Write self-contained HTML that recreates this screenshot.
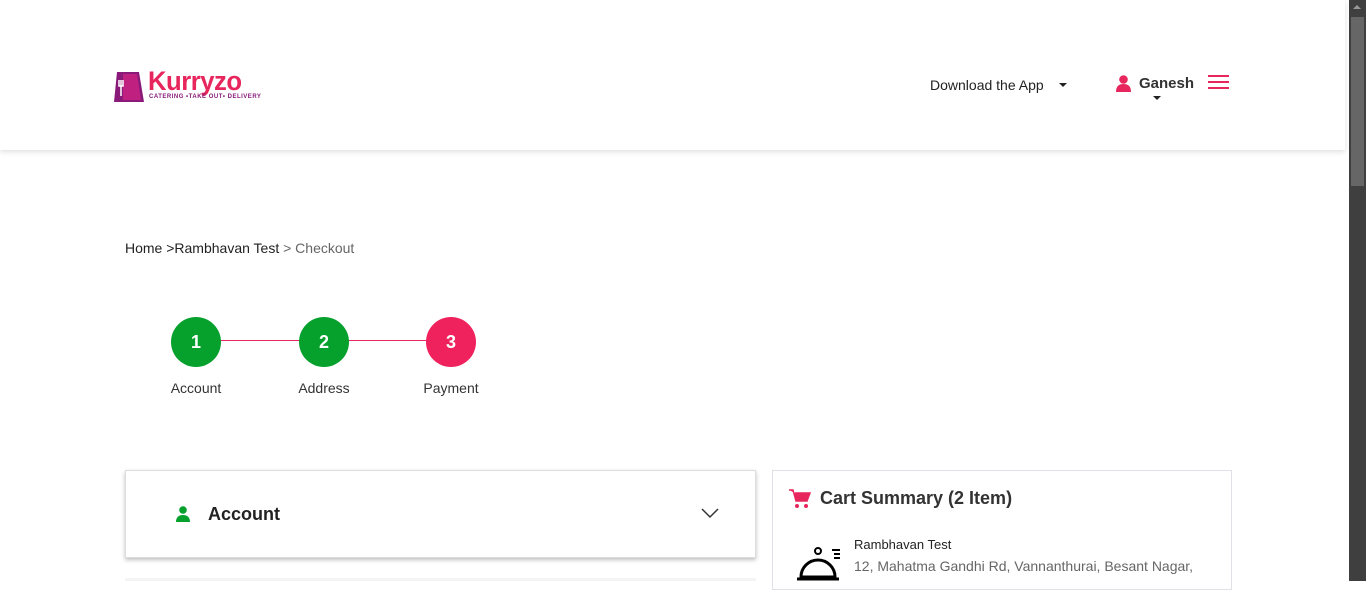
<!DOCTYPE html>
<html><head><meta charset="utf-8"><style>
*{margin:0;padding:0;box-sizing:border-box}
body{width:1366px;height:581px;overflow:hidden;background:#fff;font-family:"Liberation Sans",sans-serif;position:relative;color:#222}
.hdr{position:absolute;left:0;top:0;width:1345px;height:150px;background:#fff;box-shadow:0 2px 5px rgba(0,0,0,.12)}
.sb{position:absolute;left:1349px;top:0;width:17px;height:581px;background:#3f3f3f}
.th{position:absolute;left:1351px;top:17px;width:13px;height:169px;background:#666}
.abs{position:absolute}
.circ{position:absolute;width:50px;height:50px;border-radius:50%;color:#fff;font-weight:bold;font-size:18px;text-align:center;line-height:50px}
.lbl{position:absolute;font-size:14px;color:#333;width:100px;text-align:center}
</style></head><body>
<div class="hdr">
 <svg class="abs" style="left:113px;top:68px" width="32" height="34"><path d="M4 4h22l5 30H1z" fill="#8a1a7a"/><path d="M10 6h14l4 26H10z" fill="#c02080"/><path d="M8 12v16M6 12v6h4v-6" stroke="#fff" stroke-width="1.5" fill="none"/></svg>
 <div class="abs" style="left:148px;top:66px;font-size:27px;font-weight:bold;color:#e8265e;letter-spacing:-0.5px;transform:scaleX(0.95);transform-origin:left">Kurryzo</div>
 <div class="abs" style="left:149px;top:94px;font-size:6px;font-weight:bold;color:#8a1a7a;letter-spacing:.5px">CATERING •TAKE OUT• DELIVERY</div>
 <div class="abs" style="left:930px;top:77px;font-size:14px;color:#222">Download the App</div>
 <div class="abs" style="left:1059px;top:83px;border:4px solid transparent;border-top:4px solid #222;border-bottom:0"></div>
 <svg class="abs" style="left:1116px;top:75px" width="15" height="17"><circle cx="7.5" cy="4.5" r="4.3" fill="#e8265e"/><path d="M0 17c0-6 3-8 7.5-8s7.5 2 7.5 8z" fill="#e8265e"/></svg>
 <div class="abs" style="left:1139px;top:75px;font-size:15px;font-weight:bold;color:#333">Ganesh</div>
 <div class="abs" style="left:1153px;top:96px;border:4px solid transparent;border-top:4px solid #222;border-bottom:0"></div>
 <div class="abs" style="left:1208px;top:75px;width:21px;height:2px;background:#e8265e;box-shadow:0 6px 0 #e8265e,0 12px 0 #e8265e"></div>
</div>
<div class="abs" style="left:125px;top:240px;font-size:14px;color:#222">Home &gt;Rambhavan Test <span style="color:#666">&gt; Checkout</span></div>
<div class="abs" style="left:196px;top:340px;width:255px;height:1px;background:#e8265e"></div>
<div class="circ" style="left:171px;top:317px;background:#06a02d">1</div>
<div class="circ" style="left:299px;top:317px;background:#06a02d">2</div>
<div class="circ" style="left:426px;top:317px;background:#f0225d">3</div>
<div class="lbl" style="left:146px;top:380px">Account</div>
<div class="lbl" style="left:274px;top:380px">Address</div>
<div class="lbl" style="left:401px;top:380px">Payment</div>
<div class="abs" style="left:125px;top:470px;width:631px;height:88px;border:1px solid #ddd;box-shadow:0 2px 4px rgba(0,0,0,.25);background:#fff"></div>
<svg class="abs" style="left:176px;top:506px" width="14" height="16"><circle cx="7" cy="4" r="3.8" fill="#06a02d"/><path d="M0 16c0-5 3-7 7-7s7 2 7 7z" fill="#06a02d"/></svg>
<div class="abs" style="left:208px;top:504px;font-size:18px;font-weight:bold;color:#222">Account</div>
<svg class="abs" style="left:701px;top:508px" width="18" height="11"><path d="M1 1l8 8 8-8" stroke="#333" stroke-width="1.5" fill="none"/></svg>
<div class="abs" style="left:125px;top:578px;width:631px;height:3px;background:#f4f4f4"></div>
<div class="abs" style="left:772px;top:470px;width:460px;height:120px;border:1px solid #e0e0e6"></div>
<svg class="abs" style="left:789px;top:489px" width="22" height="20"><path d="M0 1h4l3 11h11l3-8H6" fill="#e8265e" stroke="#e8265e" stroke-width="1.5"/><circle cx="8" cy="17" r="2" fill="#e8265e"/><circle cx="17" cy="17" r="2" fill="#e8265e"/></svg>
<div class="abs" style="left:820px;top:488px;font-size:18px;font-weight:bold;color:#333">Cart Summary (2 Item)</div>
<svg class="abs" style="left:796px;top:547px" width="50" height="34"><circle cx="22" cy="4" r="3" fill="none" stroke="#000" stroke-width="2"/><path d="M5 30A17 17 0 0 1 39 30z" fill="none" stroke="#000" stroke-width="3"/><path d="M1 32h42" stroke="#000" stroke-width="3"/><path d="M36 3h8M38 7h6M38 11h6" stroke="#000" stroke-width="2"/></svg>
<div class="abs" style="left:854px;top:537px;font-size:13px;color:#222">Rambhavan Test</div>
<div class="abs" style="left:854px;top:558px;font-size:14px;color:#666">12, Mahatma Gandhi Rd, Vannanthurai, Besant Nagar,</div>
<div class="sb"></div><div class="th"></div>
<div class="abs" style="left:1353px;top:5px;border:4px solid transparent;border-bottom:4px solid #999;border-top:0"></div>
</body></html>
